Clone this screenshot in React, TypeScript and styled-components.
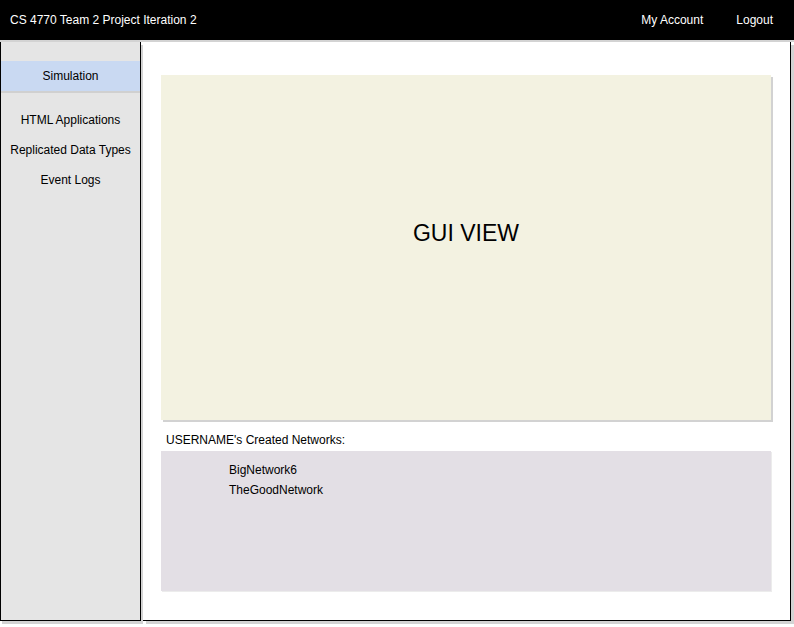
import React from "react";
import styled, { createGlobalStyle } from "styled-components";

const Global = createGlobalStyle`
  *, *::before, *::after { box-sizing: border-box; }
  html, body { margin: 0; padding: 0; background: #ffffff; }
  body { font-family: "Liberation Sans", Arial, sans-serif; color: #000; }
`;

const Page = styled.div`
  width: 794px;
  height: 627px;
  display: flex;
  flex-direction: column;
  overflow: hidden;
`;

const Header = styled.header`
  height: 42px;
  flex-shrink: 0;
  background: #000;
  border-bottom: 2px solid #d3d3d3;
  display: flex;
  align-items: center;
  justify-content: space-between;
  padding: 0 21px 0 10px;
  color: #fff;
  font-size: 12px;
`;

const Title = styled.div`
  white-space: nowrap;
`;

const Nav = styled.nav`
  display: flex;
  gap: 33px;
`;

const NavLink = styled.span`
  white-space: nowrap;
`;

const Body = styled.div`
  display: flex;
  height: 579px;
  flex-shrink: 0;
`;

const Sidebar = styled.aside`
  width: 141px;
  flex-shrink: 0;
  border-left: 1px solid #000;
  border-right: 1px solid #000;
  border-bottom: 1px solid #000;
  background: #e5e5e5;
  box-shadow: 2px 3px 0 #d3d3d3;
  padding-top: 19px;
  display: flex;
  flex-direction: column;
`;

const SideItem = styled.div<{ $active?: boolean }>`
  height: 30px;
  display: flex;
  align-items: center;
  justify-content: center;
  font-size: 12px;
  white-space: nowrap;
  background: ${(p) => (p.$active ? "#c9d9f2" : "transparent")};
  box-shadow: ${(p) => (p.$active ? "0 2px 0 #d0d0d0" : "none")};
  margin-bottom: ${(p) => (p.$active ? "14px" : "0")};
`;

const Main = styled.main`
  margin-left: 2px;
  width: 648px;
  flex-shrink: 0;
  border-right: 1px solid #000;
  border-bottom: 1px solid #000;
  background: #fff;
  box-shadow: 3px 3px 0 #d3d3d3;
  padding: 33px 0 0 18px;
  display: flex;
  flex-direction: column;
`;

const GuiView = styled.section`
  width: 610px;
  height: 345px;
  background: #f3f2e1;
  box-shadow: 2px 2px 0 #d2d2d2;
  display: flex;
  align-items: center;
  justify-content: center;
  font-size: 23px;
  padding-bottom: 28px;
`;

const Label = styled.div`
  font-size: 12px;
  margin: 13px 0 0 5px;
  height: 18px;
  line-height: 14px;
`;

const Networks = styled.section`
  width: 610px;
  height: 140px;
  background: #e3dfe5;
  box-shadow: 1px 1px 0 #ececec;
  padding: 9px 0 0 68px;
  display: flex;
  flex-direction: column;
`;

const NetworkItem = styled.div`
  font-size: 12px;
  line-height: 20px;
`;

export default function App() {
  return (
    <Page>
      <Global />
      <Header>
        <Title>CS 4770 Team 2 Project Iteration 2</Title>
        <Nav>
          <NavLink>My Account</NavLink>
          <NavLink>Logout</NavLink>
        </Nav>
      </Header>
      <Body>
        <Sidebar>
          <SideItem $active>Simulation</SideItem>
          <SideItem>HTML Applications</SideItem>
          <SideItem>Replicated Data Types</SideItem>
          <SideItem>Event Logs</SideItem>
        </Sidebar>
        <Main>
          <GuiView>GUI VIEW</GuiView>
          <Label>USERNAME's Created Networks:</Label>
          <Networks>
            <NetworkItem>BigNetwork6</NetworkItem>
            <NetworkItem>TheGoodNetwork</NetworkItem>
          </Networks>
        </Main>
      </Body>
    </Page>
  );
}
